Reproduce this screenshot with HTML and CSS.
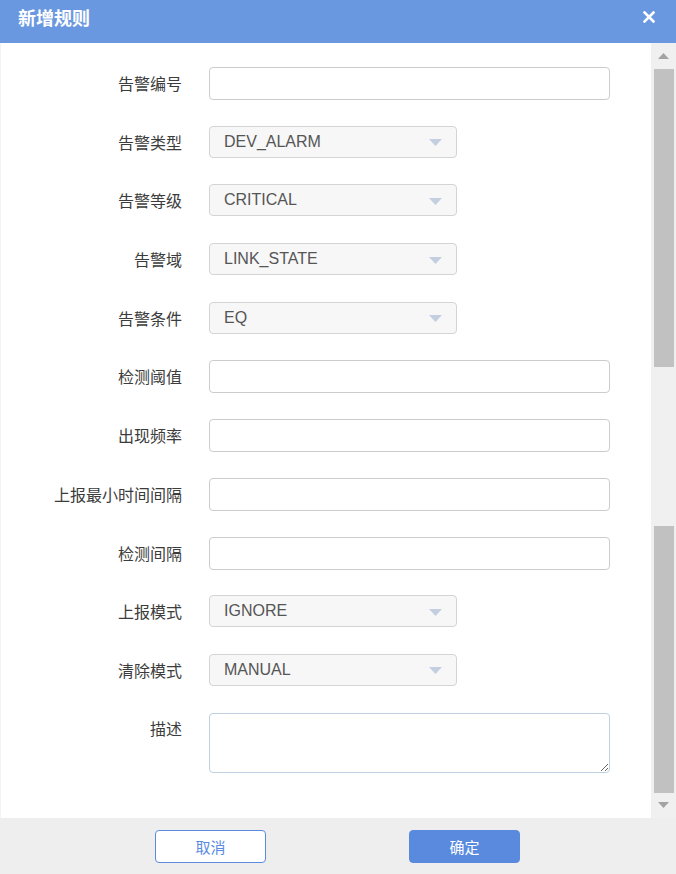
FILE: index.html
```html
<!DOCTYPE html>
<html lang="zh">
<head>
<meta charset="utf-8">
<title>新增规则</title>
<link rel="stylesheet" href="styles.css">
</head>
<body>
<div class="dialog">
  <div class="header">
    <span class="title">新增规则</span>
    <svg class="close" width="12" height="12" viewBox="0 0 12 12"><path d="M1.5 1.5 L10.5 10.5 M10.5 1.5 L1.5 10.5" stroke="#fff" stroke-width="2.6" stroke-linecap="square"/></svg>
  </div>
  <div class="body">
    <div class="main">
      <div class="form">
        <label class="lbl">告警编号</label><div class="field"><div class="input"></div></div>
        <label class="lbl">告警类型</label><div class="field"><div class="select"><span>DEV_ALARM</span><svg class="arrow" width="13" height="7" viewBox="0 0 13 7"><path d="M0 0 H13 L6.5 7 Z" fill="#c3cfdf"/></svg></div></div>
        <label class="lbl">告警等级</label><div class="field"><div class="select"><span>CRITICAL</span><svg class="arrow" width="13" height="7" viewBox="0 0 13 7"><path d="M0 0 H13 L6.5 7 Z" fill="#c3cfdf"/></svg></div></div>
        <label class="lbl">告警域</label><div class="field"><div class="select"><span>LINK_STATE</span><svg class="arrow" width="13" height="7" viewBox="0 0 13 7"><path d="M0 0 H13 L6.5 7 Z" fill="#c3cfdf"/></svg></div></div>
        <label class="lbl">告警条件</label><div class="field"><div class="select"><span>EQ</span><svg class="arrow" width="13" height="7" viewBox="0 0 13 7"><path d="M0 0 H13 L6.5 7 Z" fill="#c3cfdf"/></svg></div></div>
        <label class="lbl">检测阈值</label><div class="field"><div class="input"></div></div>
        <label class="lbl">出现频率</label><div class="field"><div class="input"></div></div>
        <label class="lbl">上报最小时间间隔</label><div class="field"><div class="input"></div></div>
        <label class="lbl">检测间隔</label><div class="field"><div class="input"></div></div>
        <label class="lbl">上报模式</label><div class="field"><div class="select"><span>IGNORE</span><svg class="arrow" width="13" height="7" viewBox="0 0 13 7"><path d="M0 0 H13 L6.5 7 Z" fill="#c3cfdf"/></svg></div></div>
        <label class="lbl">清除模式</label><div class="field"><div class="select"><span>MANUAL</span><svg class="arrow" width="13" height="7" viewBox="0 0 13 7"><path d="M0 0 H13 L6.5 7 Z" fill="#c3cfdf"/></svg></div></div>
        <label class="lbl lbl-top">描述</label><div class="field"><textarea class="textarea"></textarea></div>
      </div>
    </div>
    <div class="scrollbar">
      <div class="sb-btn"><svg width="11" height="6" viewBox="0 0 11 6"><path d="M0 6 H11 L5.5 0 Z" fill="#a3a3a3"/></svg></div>
      <div class="thumb thumb-a"></div>
      <div class="track-gap"></div>
      <div class="thumb thumb-b"></div>
      <div class="sb-btn sb-down"><svg width="11" height="6" viewBox="0 0 11 6"><path d="M0 0 H11 L5.5 6 Z" fill="#a3a3a3"/></svg></div>
    </div>
  </div>
  <div class="footer">
    <button class="btn btn-cancel">取消</button>
    <button class="btn btn-ok">确定</button>
  </div>
</div>
</body>
</html>
```
FILE: styles.css
```css
* { box-sizing: border-box; }
html, body { margin: 0; padding: 0; background: #ffffff; }
body {
  font-family: "Noto Sans CJK SC", "Liberation Sans", sans-serif;
  width: 676px;
  height: 874px;
  overflow: hidden;
}
.dialog {
  display: flex;
  flex-direction: column;
  width: 676px;
  height: 874px;
}
.header {
  height: 43px;
  flex: none;
  background: #6a98e0;
  display: flex;
  justify-content: space-between;
  align-items: flex-start;
  padding: 0 21px 0 18px;
}
.title {
  color: #ffffff;
  font-size: 18px;
  font-weight: bold;
  line-height: 34px;
}
.close { margin-top: 11px; }
.body {
  flex: 1;
  display: flex;
  min-height: 0;
}
.main {
  flex: 1;
  background: #ffffff;
  border-left: 1px solid #f4f4f4;
}
.form {
  display: grid;
  grid-template-columns: 181px 401px;
  column-gap: 27px;
  row-gap: 25.7px;
  grid-auto-rows: 33px;
  padding-top: 24px;
}
.form .lbl:last-of-type { }
.lbl {
  font-size: 16px;
  color: #3c3c3c;
  text-align: right;
  line-height: 33px;
  white-space: nowrap;
}
.lbl-top { line-height: 30px; }
.field { display: flex; }
.input {
  width: 401px;
  height: 33px;
  border: 1px solid #cccccc;
  border-radius: 4px;
  background: #ffffff;
}
.select {
  width: 248px;
  height: 32px;
  border: 1px solid #d4d4d4;
  border-radius: 4px;
  background: #f7f7f7;
  display: flex;
  align-items: center;
  justify-content: space-between;
  padding: 0 14px 0 14px;
  font-family: "Liberation Sans", "Noto Sans CJK SC", sans-serif;
  font-size: 16px;
  color: #555555;
}
.arrow { margin-top: 2px; }
.form > .field:last-child { height: 59px; }
.textarea {
  width: 401px;
  height: 60px;
  border: 1px solid #bfd0e0;
  border-radius: 4px;
  resize: vertical;
  margin: 0;
  padding: 4px;
  font-family: inherit;
}
.scrollbar {
  width: 25px;
  flex: none;
  background: #f0f0f0;
  display: flex;
  flex-direction: column;
  align-items: center;
}
.sb-btn {
  height: 26px;
  width: 100%;
  display: flex;
  justify-content: center;
  padding-top: 10px;
}
.sb-down { height: 25px; padding-top: 9px; }
.thumb {
  width: 20px;
  background: #c1c1c1;
  margin-left: 1px;
}
.thumb-a { height: 298px; }
.track-gap { height: 159px; }
.thumb-b { height: 267px; }
.footer {
  height: 56px;
  flex: none;
  background: #eeeeee;
  display: flex;
  align-items: flex-start;
  padding: 12px 0 0 155px;
  gap: 143px;
}
.btn {
  width: 111px;
  height: 33px;
  border-radius: 4px;
  font-family: "Noto Sans CJK SC", sans-serif;
  font-size: 15px;
  padding: 0;
  cursor: pointer;
}
.btn-cancel {
  background: #ffffff;
  border: 1px solid #5b8bdf;
  color: #5b8bdf;
}
.btn-ok {
  background: #5a8ade;
  border: 1px solid #5a8ade;
  color: #ffffff;
}
```
